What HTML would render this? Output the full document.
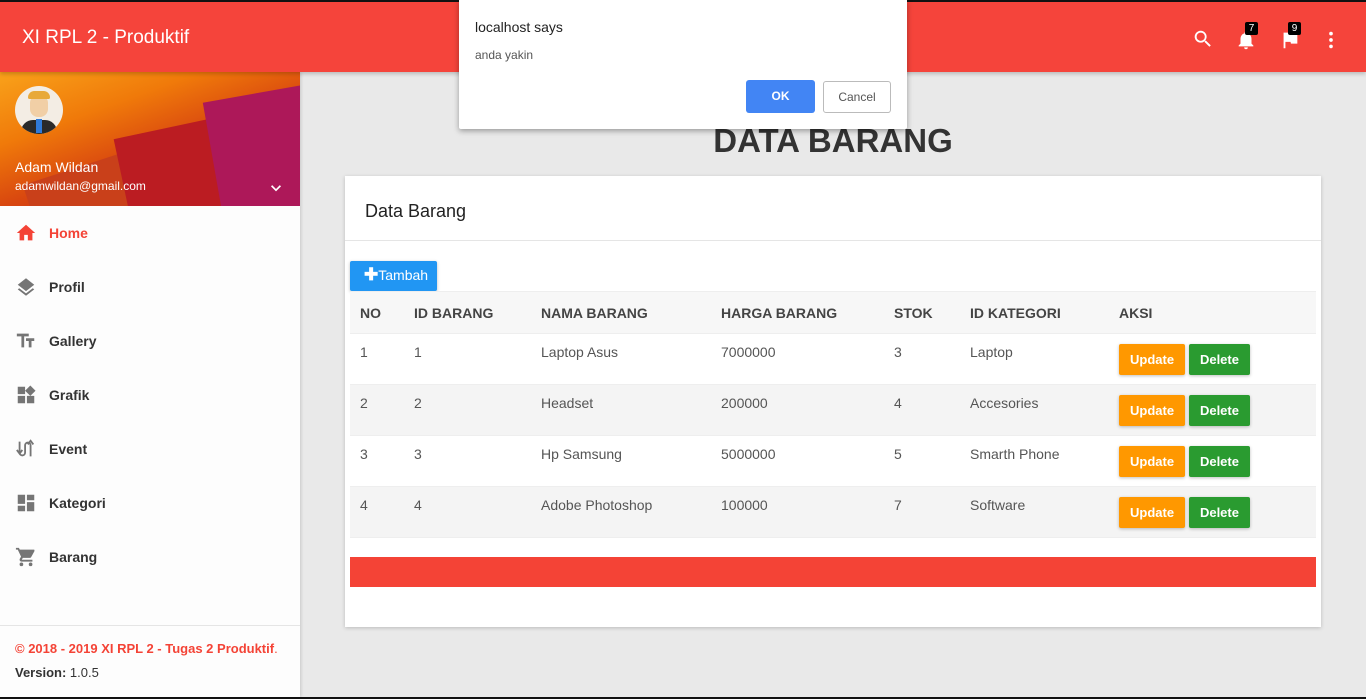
<!DOCTYPE html>
<html><head><meta charset="utf-8"><style>
*{box-sizing:border-box;margin:0;padding:0}
body{width:1366px;height:699px;overflow:hidden;background:#e9e9e9;font-family:"Liberation Sans",sans-serif;position:relative;color:#333}
.top{position:absolute;left:0;top:0;width:1366px;height:72px;background:#f5443b;border-top:2px solid #111;box-shadow:0 2px 4px rgba(0,0,0,.2);z-index:2}
.top .t{position:absolute;left:22px;top:25px;color:#fff;font-size:19px}
.side{position:absolute;left:0;top:72px;width:300px;height:625px;background:#fdfdfd;box-shadow:1px 0 3px rgba(0,0,0,.15)}
.hdr{position:relative;height:134px;overflow:hidden;background:linear-gradient(160deg,#f9a21a 0%,#f07a0a 30%,#d9480f 55%,#c5231e 80%)}
.menu div{height:54px;display:flex;align-items:center;padding-left:15px;font-weight:bold;font-size:14px;color:#333}
.menu svg{width:22px;height:22px;margin-right:12px}
.foot{position:absolute;left:0;bottom:0;width:300px;height:72px;border-top:1px solid #e5e5e5;padding:15px;font-size:13px}
.card{position:absolute;left:345px;top:176px;width:976px;height:451px;background:#fff;box-shadow:0 1px 4px rgba(0,0,0,.2)}
table{border-collapse:collapse;position:absolute;left:5px;top:115px;width:966px;font-size:14px}
th{text-align:left;height:42px;background:#f7f7f7;color:#444;font-size:14px;border-top:1px solid #eee;border-bottom:1px solid #eee}
td{height:51px;color:#555;vertical-align:top;padding-top:10px;border-bottom:1px solid #eee}
tr.g td{background:#f4f4f4}
th:first-child,td:first-child{padding-left:10px}
.b{display:inline-block;color:#fff;font-size:13px;font-weight:bold;padding:8px 11px;margin-top:0px;border-radius:2px;box-shadow:0 1px 3px rgba(0,0,0,.25)}
.dlg{position:absolute;left:459px;top:0;width:448px;height:129px;background:#fff;box-shadow:0 2px 6px rgba(0,0,0,.35);z-index:5;border-radius:0 0 2px 2px}
.badge{position:absolute;background:#000;color:#fff;font-size:10px;width:13px;height:13px;text-align:center;line-height:13px;border-radius:2px}
</style></head><body>
<div class="top"><div class="t">XI RPL 2 - Produktif</div>
<svg style="position:absolute;left:1192px;top:26px" width="22" height="22" viewBox="0 0 24 24"><path fill="#fff" d="M15.5 14h-.8l-.3-.3A6.5 6.5 0 1 0 9.5 16a6.5 6.5 0 0 0 4.2-1.6l.3.3v.8l5 5 1.5-1.5-5-5zm-6 0a4.5 4.5 0 1 1 0-9 4.5 4.5 0 0 1 0 9z"/></svg>
<svg style="position:absolute;left:1235px;top:27px" width="22" height="22" viewBox="0 0 24 24"><path fill="#fff" d="M12 22a2 2 0 0 0 2-2h-4a2 2 0 0 0 2 2zm6-6v-5c0-3-1.6-5.6-4.5-6.3V4a1.5 1.5 0 0 0-3 0v.7C7.6 5.4 6 8 6 11v5l-2 2v1h16v-1z"/></svg>
<div class="badge" style="left:1245px;top:20px">7</div>
<svg style="position:absolute;left:1279px;top:27px" width="22" height="22" viewBox="0 0 24 24"><path fill="#fff" d="M14.4 6L14 4H5v17h2v-7h5.6l.4 2h7V6z"/></svg>
<div class="badge" style="left:1288px;top:20px">9</div>
<svg style="position:absolute;left:1320px;top:27px" width="22" height="22" viewBox="0 0 24 24"><circle cx="12" cy="5" r="2" fill="#fff"/><circle cx="12" cy="12" r="2" fill="#fff"/><circle cx="12" cy="19" r="2" fill="#fff"/></svg>
</div>
<div class="side">
<div class="hdr">
<div style="position:absolute;left:35px;top:70px;width:260px;height:120px;background:#c9401a;transform:rotate(-18deg)"></div>
<div style="position:absolute;left:125px;top:45px;width:200px;height:130px;background:#bb1c22;transform:rotate(-12deg)"></div>
<div style="position:absolute;left:215px;top:20px;width:110px;height:150px;background:#ad1859;transform:rotate(-10deg)"></div>
<div style="position:absolute;left:15px;top:14px;width:48px;height:48px;border-radius:50%;background:#f3ede4;overflow:hidden">
<div style="position:absolute;left:15px;top:9px;width:18px;height:22px;border-radius:8px;background:#f1cfa6"></div>
<div style="position:absolute;left:13px;top:5px;width:22px;height:8px;border-radius:8px 8px 2px 2px;background:#e8a93a"></div>
<div style="position:absolute;left:6px;top:34px;width:36px;height:20px;border-radius:12px 12px 0 0;background:#2a2a2a"></div>
<div style="position:absolute;left:21px;top:33px;width:6px;height:14px;background:#2f7ad9"></div></div>
<div style="position:absolute;left:15px;top:87px;color:#fff;font-size:14px">Adam Wildan</div>
<div style="position:absolute;left:15px;top:107px;color:#fff;font-size:12px">adamwildan@gmail.com</div>
<svg style="position:absolute;left:266px;top:106px" width="20" height="20" viewBox="0 0 24 24"><path fill="#fff" d="M7.4 8.6L12 13.2l4.6-4.6L18 10l-6 6-6-6z"/></svg>
</div>
<div class="menu">
<div style="color:#f44336"><svg viewBox="0 0 24 24"><path fill="#f44336" d="M10 20v-6h4v6h5v-8h3L12 3 2 12h3v8z"/></svg>Home</div>
<div><svg viewBox="0 0 24 24"><path fill="#757575" d="M12 16.5l7.4-5.7L21 9.5l-9-7-9 7 1.6 1.3zm0 2.5l-7.4-5.7L3 14.6l9 7 9-7-1.6-1.3z"/></svg>Profil</div>
<div><svg viewBox="0 0 24 24"><path fill="#757575" d="M2 4v3h5v12h3V7h5V4zm19 5h-9v3h3v7h3v-7h3z"/></svg>Gallery</div>
<div><svg viewBox="0 0 24 24"><path fill="#757575" d="M13 13v8h8v-8zM3 21h8v-8H3zM3 3v8h8V3zm13.7-1.3L11 7.3l5.7 5.7 5.7-5.7z"/></svg>Grafik</div>
<div><svg viewBox="0 0 24 24"><path fill="none" stroke="#757575" stroke-width="2" d="M5 4v12M2 13l3 4 3-4M5 16a3 3 0 0 0 6 0V8a3 3 0 0 1 6 0v12M14 7l3-4 3 4"/></svg>Event</div>
<div><svg viewBox="0 0 24 24"><path fill="#757575" d="M3 13h8V3H3zm0 8h8v-6H3zm10 0h8V11h-8zm0-18v6h8V3z"/></svg>Kategori</div>
<div><svg viewBox="0 0 24 24"><path fill="#757575" d="M7 18a2 2 0 1 0 0 4 2 2 0 0 0 0-4zM1 2v2h2l3.6 7.6L5.2 14c-.1.3-.2.6-.2 1 0 1.1.9 2 2 2h12v-2H7.4l1.1-2h7.5c.8 0 1.4-.4 1.7-1l3.6-6.5L21 4H5.2l-.9-2zm16 16a2 2 0 1 0 0 4 2 2 0 0 0 0-4z"/></svg>Barang</div>
</div>
<div class="foot"><div style="color:#f44336;font-weight:bold">© 2018 - 2019 XI RPL 2 - Tugas 2 Produktif<span style="font-weight:normal">.</span></div>
<div style="margin-top:9px"><b>Version:</b> 1.0.5</div></div>
</div>
<div style="position:absolute;left:300px;top:122px;width:1066px;text-align:center;font-size:33px;font-weight:bold;color:#333">DATA BARANG</div>
<div class="card">
<div style="position:absolute;left:20px;top:25px;font-size:18px;color:#222">Data Barang</div>
<div style="position:absolute;left:0;top:64px;width:976px;border-top:1px solid #e5e5e5"></div>
<div style="position:absolute;left:5px;top:85px;width:87px;height:30px;background:#2196f3;color:#fff;font-size:14px;border-radius:2px;box-shadow:0 1px 3px rgba(0,0,0,.25);padding:6px 0 0 14px"><b style="font-size:17px;line-height:12px">✚</b>Tambah</div>
<table>
<tr><th style="width:64px">NO</th><th style="width:127px">ID BARANG</th><th style="width:180px">NAMA BARANG</th><th style="width:173px">HARGA BARANG</th><th style="width:76px">STOK</th><th style="width:149px">ID KATEGORI</th><th>AKSI</th></tr>
<tr><td>1</td><td>1</td><td>Laptop Asus</td><td>7000000</td><td>3</td><td>Laptop</td><td><span class="b" style="background:#ff9800">Update</span> <span class="b" style="background:#2a9b30">Delete</span></td></tr>
<tr class="g"><td>2</td><td>2</td><td>Headset</td><td>200000</td><td>4</td><td>Accesories</td><td><span class="b" style="background:#ff9800">Update</span> <span class="b" style="background:#2a9b30">Delete</span></td></tr>
<tr><td>3</td><td>3</td><td>Hp Samsung</td><td>5000000</td><td>5</td><td>Smarth Phone</td><td><span class="b" style="background:#ff9800">Update</span> <span class="b" style="background:#2a9b30">Delete</span></td></tr>
<tr class="g"><td>4</td><td>4</td><td>Adobe Photoshop</td><td>100000</td><td>7</td><td>Software</td><td><span class="b" style="background:#ff9800">Update</span> <span class="b" style="background:#2a9b30">Delete</span></td></tr>
</table>
<div style="position:absolute;left:5px;top:381px;width:966px;height:30px;background:#f44336"></div>
</div>
<div class="dlg">
<div style="position:absolute;left:16px;top:19px;font-size:14px;color:#222">localhost says</div>
<div style="position:absolute;left:16px;top:48px;font-size:12px;color:#555">anda yakin</div>
<div style="position:absolute;left:287px;top:80px;width:69px;height:33px;background:#4285f4;color:#fff;border-radius:3px;font-size:12px;font-weight:bold;text-align:center;line-height:33px">OK</div>
<div style="position:absolute;left:364px;top:81px;width:68px;height:32px;border:1px solid #bbb;color:#555;border-radius:3px;font-size:12px;text-align:center;line-height:30px">Cancel</div>
</div>
<div style="position:absolute;left:0;top:697px;width:1366px;height:2px;background:#111"></div>
</body></html>
